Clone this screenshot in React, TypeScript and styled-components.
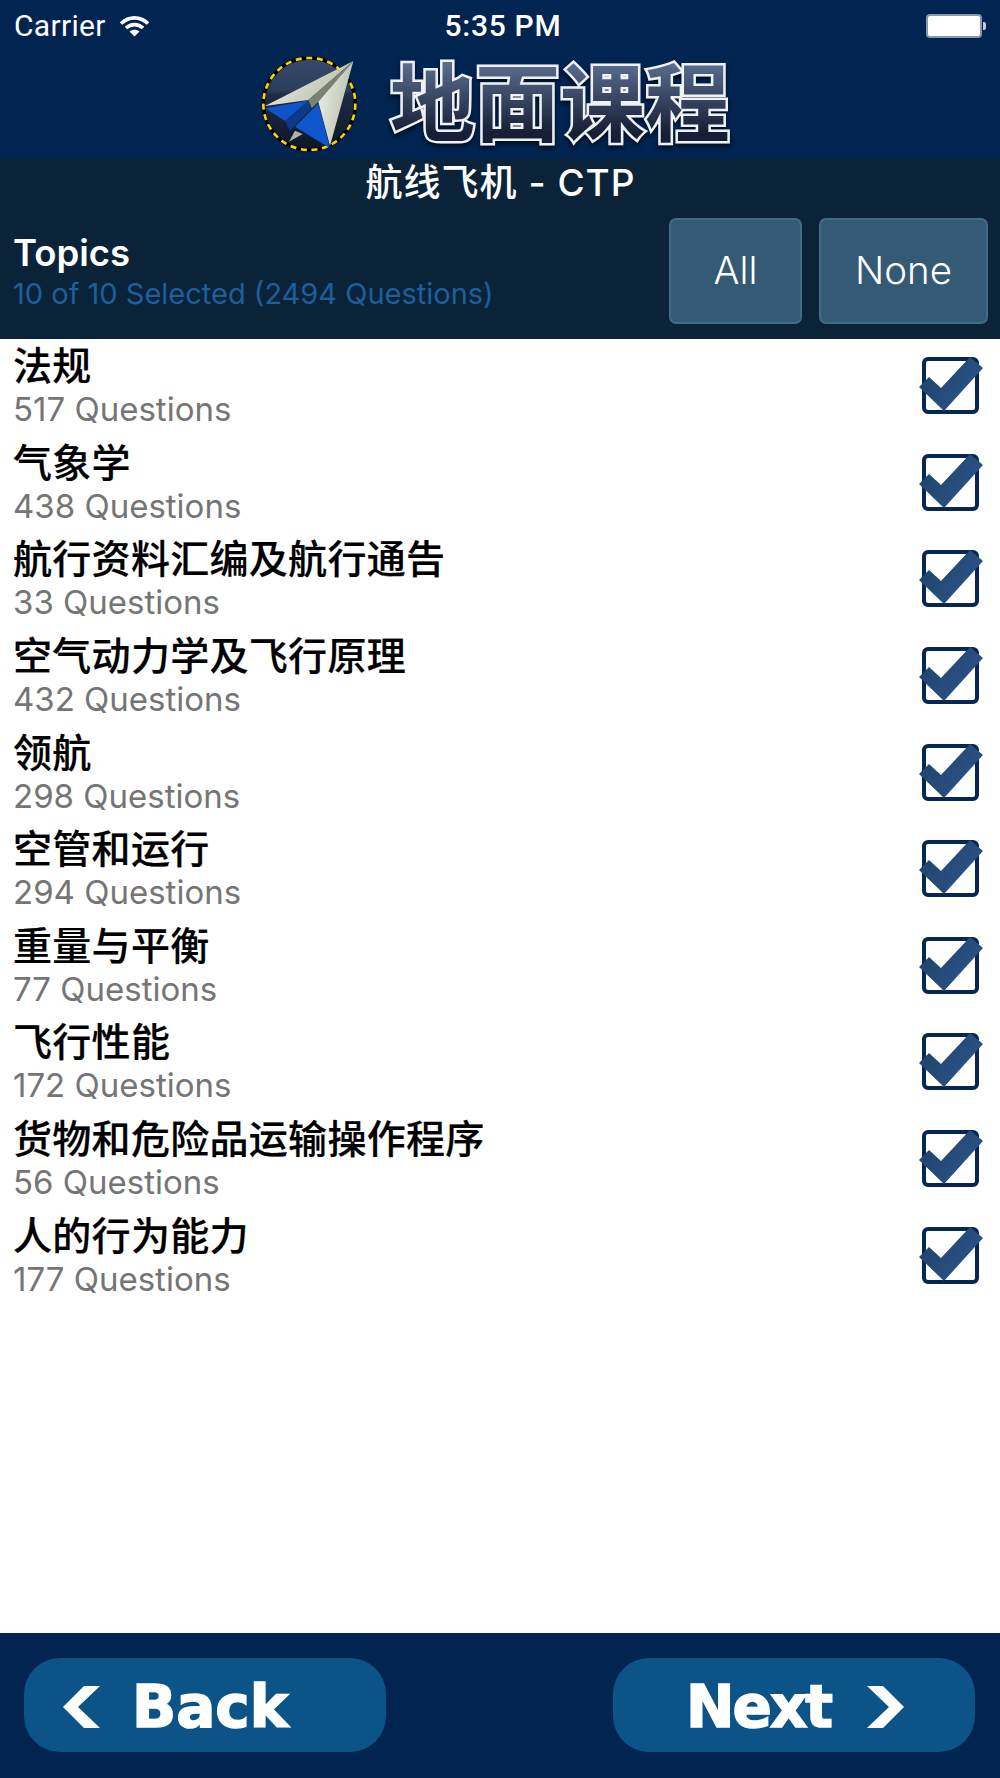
import { createGlobalStyle } from "styled-components";
import styled from "styled-components";

const topics = [
  { name: "法规", count: 517 },
  { name: "气象学", count: 438 },
  { name: "航行资料汇编及航行通告", count: 33 },
  { name: "空气动力学及飞行原理", count: 432 },
  { name: "领航", count: 298 },
  { name: "空管和运行", count: 294 },
  { name: "重量与平衡", count: 77 },
  { name: "飞行性能", count: 172 },
  { name: "货物和危险品运输操作程序", count: 56 },
  { name: "人的行为能力", count: 177 },
];

const GlobalStyle = createGlobalStyle`
  html, body {
    margin: 0;
    padding: 0;
    background: #fff;
  }
`;

const Page = styled.div`
  width: 1000px;
  height: 1778px;
  display: flex;
  flex-direction: column;
  font-family: Inter, "Noto Sans CJK SC", sans-serif;
  overflow: hidden;
`;

const StatusBar = styled.div`
  height: 45px;
  flex: none;
  box-sizing: border-box;
  padding: 6px 14px 0 14px;
  display: grid;
  grid-template-columns: 1fr auto 1fr;
  align-items: center;
  background: #012451;
  color: #fff;
  font-family: Roboto, sans-serif;
  font-size: 30px;
`;

const Carrier = styled.div`
  display: flex;
  align-items: center;
  gap: 13px;
  letter-spacing: 0.3px;
`;

const Clock = styled.div`
  padding-left: 6px;
  font-weight: 500;
  letter-spacing: 0.7px;
`;

const Battery = styled.div`
  justify-self: end;
  display: flex;
  align-items: center;
  gap: 1px;
`;

const BatteryBody = styled.div`
  width: 52px;
  height: 20px;
  background: #fff;
  border: 2px solid #8a96ab;
  border-radius: 4px;
`;

const BatteryCap = styled.div`
  width: 3px;
  height: 8px;
  background: #c4cad6;
  border-radius: 0 2px 2px 0;
`;

const Header = styled.div`
  height: 114px;
  flex: none;
  box-sizing: border-box;
  padding: 5px 30px 0 0;
  display: flex;
  justify-content: center;
  align-items: flex-start;
  background: #012451;
`;

// white outline underneath, gradient fill laid over it from the same label
const LogoTitle = styled.div`
  position: relative;
  font-family: "Noto Sans CJK SC", sans-serif;
  font-size: 85px;
  font-weight: 700;
  line-height: 96px;
  white-space: nowrap;
  color: #eef1f6;
  -webkit-text-stroke: 5px #eef1f6;
  filter: drop-shadow(0 3px 2px rgba(0, 0, 0, 0.6));

  &::after {
    content: attr(data-label);
    position: absolute;
    inset: 0;
    -webkit-text-stroke: 0;
    color: transparent;
    background: linear-gradient(#5a6d8e 14%, #161f35 86%);
    -webkit-background-clip: text;
    background-clip: text;
  }
`;

const TopicsBar = styled.div`
  height: 180px;
  flex: none;
  box-sizing: border-box;
  padding: 0 12px 15px 13px;
  display: flex;
  flex-direction: column;
  background: #0b2339;
  color: #fff;
`;

const CourseName = styled.div`
  height: 59px;
  line-height: 47px;
  text-align: center;
  font-size: 37px;
  font-weight: 500;
  letter-spacing: 1px;
`;

const TopicsRow = styled.div`
  flex: 1;
  display: flex;
  align-items: stretch;
  gap: 17px;
`;

const TopicsInfo = styled.div`
  flex: 1;
  display: flex;
  flex-direction: column;
  justify-content: center;
  padding-top: 3px;
`;

const TopicsTitle = styled.div`
  margin-top: -2px;
  font-size: 36.5px;
  font-weight: 600;
  line-height: 42px;
`;

const TopicsCount = styled.div`
  margin-top: 2px;
  font-size: 29px;
  line-height: 36px;
  color: #1c5f9b;
  white-space: nowrap;
`;

const PickButton = styled.button<{ $width: number }>`
  width: ${(p) => p.$width}px;
  padding: 0 0 2px;
  background: #345a75;
  border: 2px solid #446b85;
  border-radius: 7px;
  color: #fff;
  font-family: Inter, sans-serif;
  font-size: 38.5px;
  font-weight: 300;
`;

const List = styled.div`
  flex: 1;
  display: flex;
  flex-direction: column;
  background: #fff;
`;

const Row = styled.div`
  height: 96.6px;
  flex: none;
  box-sizing: border-box;
  padding: 0 16px 0 13px;
  display: flex;
  align-items: center;
  justify-content: space-between;
`;

const RowText = styled.div`
  display: flex;
  flex-direction: column;
  margin-top: -6px;
`;

const TopicName = styled.div`
  height: 50px;
  line-height: 50px;
  font-family: "Noto Sans CJK SC", sans-serif;
  font-size: 39px;
  font-weight: 500;
  letter-spacing: 0.3px;
  color: #000;
  -webkit-text-stroke: 0.2px #000;
`;

const TopicCount = styled.div`
  height: 42px;
  line-height: 42px;
  font-size: 33px;
  color: #757575;
`;

const CheckIcon = styled.svg`
  margin-top: -2px;
`;

const Footer = styled.div`
  height: 145px;
  flex: none;
  box-sizing: border-box;
  padding: 25px 25px 0 24px;
  display: flex;
  justify-content: space-between;
  align-items: flex-start;
  background: #012451;
`;

const NavButton = styled.button<{ $inset: number; $gap: number; $tight?: boolean }>`
  width: 362px;
  height: 94px;
  box-sizing: border-box;
  padding: 4px 0 0 ${(p) => p.$inset}px;
  display: flex;
  align-items: center;
  gap: ${(p) => p.$gap}px;
  background: #0c5488;
  border: none;
  border-radius: 36px;
  color: #fff;
  font-family: "DejaVu Sans", sans-serif;
  font-size: 58px;
  font-weight: 700;
  line-height: 1;
  letter-spacing: ${(p) => (p.$tight ? "-2px" : "0")};
  -webkit-text-stroke: 1.6px #fff;
`;

function WifiIcon() {
  return (
    <svg width="31" height="22" viewBox="0 0 31 22" fill="none" stroke="#fff" strokeWidth="3.6">
      <path d="M2 8.5 C10 1 21 1 29 8.5" />
      <path d="M7 13 C12 8.5 19 8.5 24 13" />
      <path d="M15.5 21.5 L10.5 16.5 C13.5 14.2 17.5 14.2 20.5 16.5 Z" fill="#fff" stroke="none" />
    </svg>
  );
}

// paper plane badge, coordinates at 3x
function PlaneBadge() {
  return (
    <svg width="150" height="105" viewBox="0 30 450 315">
      <defs>
        <linearGradient id="disc" x1="0" y1="0" x2="0" y2="1">
          <stop offset="0" stopColor="#36496b" />
          <stop offset="0.35" stopColor="#2c3e5c" />
          <stop offset="0.4" stopColor="#1d2b45" />
          <stop offset="1" stopColor="#0c1628" />
        </linearGradient>
        <linearGradient id="wing" x1="0" y1="0" x2="1" y2="0.4">
          <stop offset="0" stopColor="#f0f2e8" />
          <stop offset="1" stopColor="#b9bfae" />
        </linearGradient>
      </defs>
      <circle cx="208" cy="192" r="138" fill="url(#disc)" stroke="#000" strokeWidth="10" />
      <circle cx="208" cy="192" r="138" fill="none" stroke="#f6d312" strokeWidth="8" strokeDasharray="18 14" />
      <polygon points="75,198 340,63 205,180" fill="url(#wing)" />
      <polygon points="340,63 205,180 215,205 235,185" fill="#7d8270" />
      <polygon points="340,63 235,185 270,318" fill="url(#wing)" />
      <polygon points="235,190 165,260 270,325" fill="#0f55cc" />
      <polygon points="75,205 205,182 135,243" fill="#0f55c8" />
      <polygon points="205,182 215,205 150,272 135,243" fill="#0a3a8a" />
      <polygon points="165,272 147,305 188,282" fill="#aeb3a6" />
    </svg>
  );
}

function CheckBox() {
  return (
    <CheckIcon width="66" height="60" viewBox="0 0 66 60">
      <defs>
        <linearGradient id="tick" x1="0" y1="0" x2="1" y2="0.6">
          <stop offset="0" stopColor="#1f3f66" />
          <stop offset="1" stopColor="#2a5588" />
        </linearGradient>
      </defs>
      <rect x="6" y="3" width="53" height="53" rx="4" fill="#fff" stroke="#062653" strokeWidth="4" />
      <polygon points="1,31 11,21 23,32 52,1 65,12 26,55" fill="url(#tick)" />
    </CheckIcon>
  );
}

function Chevron({ flip }: { flip?: boolean }) {
  return (
    <svg width="37" height="42" viewBox="0 0 37 42">
      <polygon
        points="37,0 15,21 37,42 21,42 0,21 21,0"
        fill="#fff"
        transform={flip ? "translate(37 0) scale(-1 1)" : undefined}
      />
    </svg>
  );
}

export default function App() {
  const title = "地面课程";
  return (
    <Page>
      <GlobalStyle />
      <StatusBar>
        <Carrier>
          Carrier
          <WifiIcon />
        </Carrier>
        <Clock>5:35 PM</Clock>
        <Battery>
          <BatteryBody />
          <BatteryCap />
        </Battery>
      </StatusBar>
      <Header>
        <PlaneBadge />
        <LogoTitle data-label={title}>{title}</LogoTitle>
      </Header>
      <TopicsBar>
        <CourseName>航线飞机 - CTP</CourseName>
        <TopicsRow>
          <TopicsInfo>
            <TopicsTitle>Topics</TopicsTitle>
            <TopicsCount>10 of 10 Selected (2494 Questions)</TopicsCount>
          </TopicsInfo>
          <PickButton $width={133}>All</PickButton>
          <PickButton $width={169}>None</PickButton>
        </TopicsRow>
      </TopicsBar>
      <List>
        {topics.map((t) => (
          <Row key={t.name}>
            <RowText>
              <TopicName>{t.name}</TopicName>
              <TopicCount>{t.count} Questions</TopicCount>
            </RowText>
            <CheckBox />
          </Row>
        ))}
      </List>
      <Footer>
        <NavButton $inset={39} $gap={32}>
          <Chevron />
          Back
        </NavButton>
        <NavButton $inset={73} $gap={36} $tight>
          Next
          <Chevron flip />
        </NavButton>
      </Footer>
    </Page>
  );
}
